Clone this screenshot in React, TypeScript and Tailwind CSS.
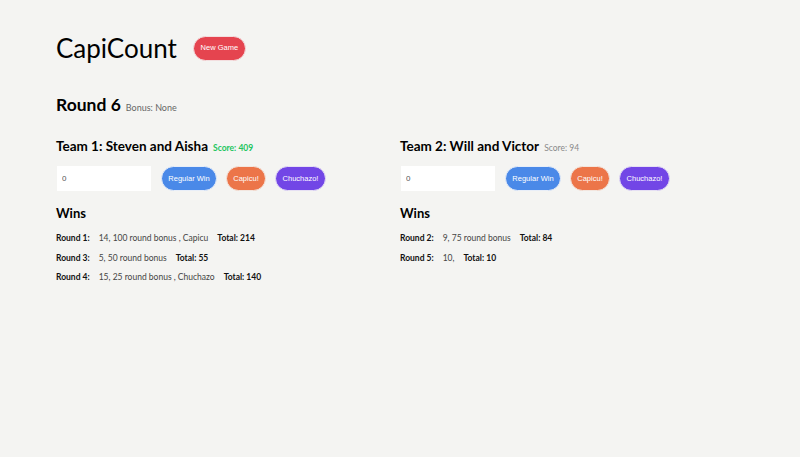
type Win = { round: number; detail: string; total: number }

type Team = {
  name: string
  score: number
  leading: boolean
  wins: Win[]
}

const TEAMS: Team[] = [
  {
    name: 'Team 1: Steven and Aisha',
    score: 409,
    leading: true,
    wins: [
      { round: 1, detail: '14, 100 round bonus , Capicu', total: 214 },
      { round: 3, detail: '5, 50 round bonus', total: 55 },
      { round: 4, detail: '15, 25 round bonus , Chuchazo', total: 140 },
    ],
  },
  {
    name: 'Team 2: Will and Victor',
    score: 94,
    leading: false,
    wins: [
      { round: 2, detail: '9, 75 round bonus', total: 84 },
      { round: 5, detail: '10,', total: 10 },
    ],
  },
]

const btn =
  "h-[25px] rounded-full border text-white text-[7.5px] font-['Liberation_Sans',sans-serif] flex items-center justify-center"

function TeamColumn({ team }: { team: Team }) {
  return (
    <div className="flex flex-col">
      <div className="flex items-baseline gap-[5px] h-[20px]">
        <h2 className="text-[13.5px] leading-[20px] font-bold text-black">{team.name}</h2>
        <span className={team.leading ? 'text-[8.5px] font-bold text-[#22c55e]' : 'text-[8.5px] text-[#8a8a8a]'}>
          Score: {team.score}
        </span>
      </div>

      <div className="mt-[10px] flex items-center gap-[9px]">
        <input
          defaultValue="0"
          className="ml-[1px] w-[94px] h-[25px] bg-white px-[5px] text-[8px] text-[#555] outline-none font-['Liberation_Sans',sans-serif]"
        />
        <button className={`${btn} ml-[1px] w-[56px] bg-[#4a89e8] border-[#e8eef8]`}>Regular Win</button>
        <button className={`${btn} w-[40px] bg-[#ec7549] border-[#f3e6df]`}>Capicu!</button>
        <button className={`${btn} w-[51px] bg-[#7246e6] border-[#e6e0f4]`}>Chuchazo!</button>
      </div>

      <h3 className="mt-[12px] text-[13px] leading-[20px] font-bold text-black">Wins</h3>
      <div className="mt-[9px] flex flex-col gap-[7px]">
        {team.wins.map(w => (
          <div key={w.round} className="flex items-center text-[8.5px] leading-[12.5px]">
            <span className="font-bold text-[#111]">Round {w.round}:</span>
            <span className="ml-[9px] text-[#444]">{w.detail}</span>
            <span className="ml-[9px] font-bold text-[#111]">Total: {w.total}</span>
          </div>
        ))}
      </div>
    </div>
  )
}

export default function App() {
  return (
    <div className="min-h-[457px] w-full bg-[#f4f4f2] px-14 pt-[30px] font-['Lato',sans-serif]">
      <div className="flex items-center gap-4 h-[36px]">
        <h1 className="text-[26px] font-normal text-black leading-[36px]">CapiCount</h1>
        <button className={`${btn} w-[53px] bg-[#e5444f] border-[#f3dedf]`}>New Game</button>
      </div>

      <div className="mt-[27px] flex items-baseline gap-[5px] h-[24px]">
        <h2 className="text-[17.5px] leading-[24px] font-bold text-black">Round 6</h2>
        <span className="text-[9px] text-[#666]">Bonus: None</span>
      </div>

      <div className="mt-[19px] grid grid-cols-2">
        {TEAMS.map(t => (
          <TeamColumn key={t.name} team={t} />
        ))}
      </div>
    </div>
  )
}
